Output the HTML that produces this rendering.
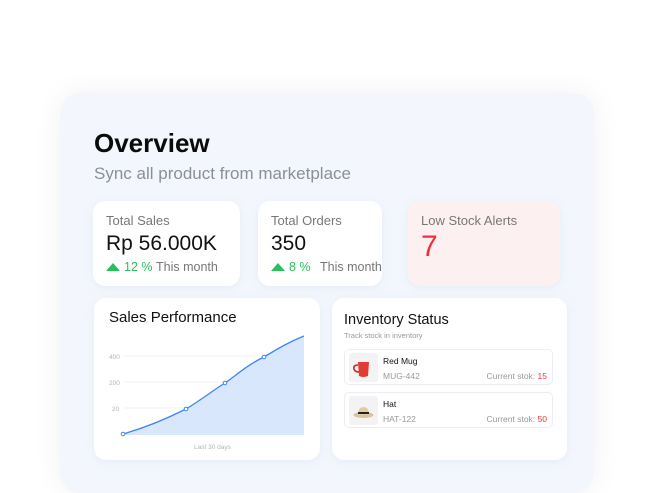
<!DOCTYPE html>
<html><head><meta charset="utf-8"><style>
*{margin:0;padding:0;box-sizing:border-box}
body{width:654px;height:469px;background:#fff;font-family:"Liberation Sans",sans-serif;position:relative;overflow:hidden}
.panel{position:absolute;left:60px;top:93px;width:534px;height:400px;background:#f3f7fd;border-radius:20px;box-shadow:0 0 30px rgba(0,0,0,.06)}
.a{position:absolute}
.card{position:absolute;background:#fff;border-radius:12px;box-shadow:0 2px 10px rgba(120,140,180,.1)}
.lbl{position:absolute;left:13px;top:12px;font-size:13px;color:#777}
.big{position:absolute;left:13px;top:31px;font-size:21px;color:#111}
.chg{position:absolute;left:13px;top:59px;font-size:12.5px;color:#2bbf5b;white-space:nowrap}
.tm{position:absolute;top:59px;font-size:12.5px;color:#777;white-space:nowrap}
.tri{display:inline-block;width:0;height:0;border-left:7px solid transparent;border-right:7px solid transparent;border-bottom:8px solid #2bbf5b;margin-right:4px;vertical-align:0}
.row{position:absolute;left:12px;width:209px;height:36px;border:1px solid #eceef2;border-radius:5px;background:#fff}
.img{position:absolute;left:4px;top:3px;width:29px;height:29px;background:#f3f3f3;border-radius:3px}
.nm{position:absolute;left:38px;top:6px;font-size:8.5px;color:#111}
.sk{position:absolute;left:38px;top:21px;font-size:8.5px;color:#999}
.st{position:absolute;right:5px;top:21px;font-size:8.5px;color:#999}
.st b{color:#f0353d;font-weight:normal}
</style></head><body>
<div class="panel"></div>
<div class="a" style="left:94px;top:128px;font-size:26px;font-weight:bold;color:#0b0b0b">Overview</div>
<div class="a" style="left:94px;top:164px;font-size:17px;color:#8a8f98">Sync all product from marketplace</div>

<div class="card" style="left:93px;top:201px;width:147px;height:85px">
<div class="lbl">Total Sales</div><div class="big">Rp 56.000K</div>
<div class="chg"><i class="tri"></i>12 %</div><div class="tm" style="left:63px">This month</div></div>
<div class="card" style="left:258px;top:201px;width:124px;height:85px">
<div class="lbl">Total Orders</div><div class="big">350</div>
<div class="chg"><i class="tri"></i>8 %</div><div class="tm" style="left:62px">This month</div></div>
<div class="card" style="left:408px;top:201px;width:152px;height:85px;background:#fdf0f0">
<div class="lbl">Low Stock Alerts</div><div class="big" style="font-size:30px;top:29px;color:#f0303a">7</div></div>

<div class="card" style="left:94px;top:298px;width:226px;height:162px">
<div class="a" style="left:15px;top:11px;font-size:15px;color:#111">Sales Performance</div>
<svg class="a" style="left:0;top:0" width="226" height="162">
<g stroke="#eef0f3" stroke-width="1"><line x1="30" y1="58" x2="210" y2="58"/><line x1="30" y1="84" x2="210" y2="84"/><line x1="30" y1="110" x2="210" y2="110"/></g>
<g font-size="6.5" fill="#b5b5b5" font-family="Liberation Sans"><text x="15" y="61">400</text><text x="15" y="87">200</text><text x="18" y="113">20</text><text x="100" y="151">Last 30 days</text></g>
<path d="M29 136 C50 130 70 122 92 111 C110 100 118 93 131 85 C145 75 155 66 170 59 C185 50 195 44 210 38 L210 137 L29 137 Z" fill="#d9e7fc"/>
<path d="M29 136 C50 130 70 122 92 111 C110 100 118 93 131 85 C145 75 155 66 170 59 C185 50 195 44 210 38" fill="none" stroke="#3d86f3" stroke-width="1.3"/>
<g fill="#fff" stroke="#3d86f3" stroke-width="1"><circle cx="29" cy="136" r="1.8"/><circle cx="92" cy="111" r="1.8"/><circle cx="131" cy="85" r="1.8"/><circle cx="170" cy="59" r="1.8"/></g>
</svg></div>

<div class="card" style="left:332px;top:298px;width:235px;height:162px">
<div class="a" style="left:12px;top:14px;font-size:14.5px;color:#111">Inventory Status</div>
<div class="a" style="left:12px;top:33px;font-size:7.5px;color:#999">Track stock in inventory</div>
<div class="row" style="top:51px"><div class="img"><svg width="29" height="29"><path d="M9 9 L20 9 L19 23 Q14.5 25 10 23 Z" fill="#e23b33"/><path d="M9 12 Q4 12 5 16 Q6 19 10 19" fill="none" stroke="#c52a25" stroke-width="1.6"/></svg></div><div class="nm">Red Mug</div><div class="sk">MUG-442</div><div class="st">Current stok: <b>15</b></div></div>
<div class="row" style="top:94px"><div class="img"><svg width="29" height="29"><ellipse cx="14.5" cy="19" rx="10" ry="3" fill="#d9c39a"/><path d="M9 19 Q9 11 14.5 11 Q20 11 20 19 Z" fill="#e1cda5"/><rect x="9" y="16" width="11" height="2" fill="#222"/></svg></div><div class="nm">Hat</div><div class="sk">HAT-122</div><div class="st">Current stok: <b>50</b></div></div>
</div>
</body></html>
